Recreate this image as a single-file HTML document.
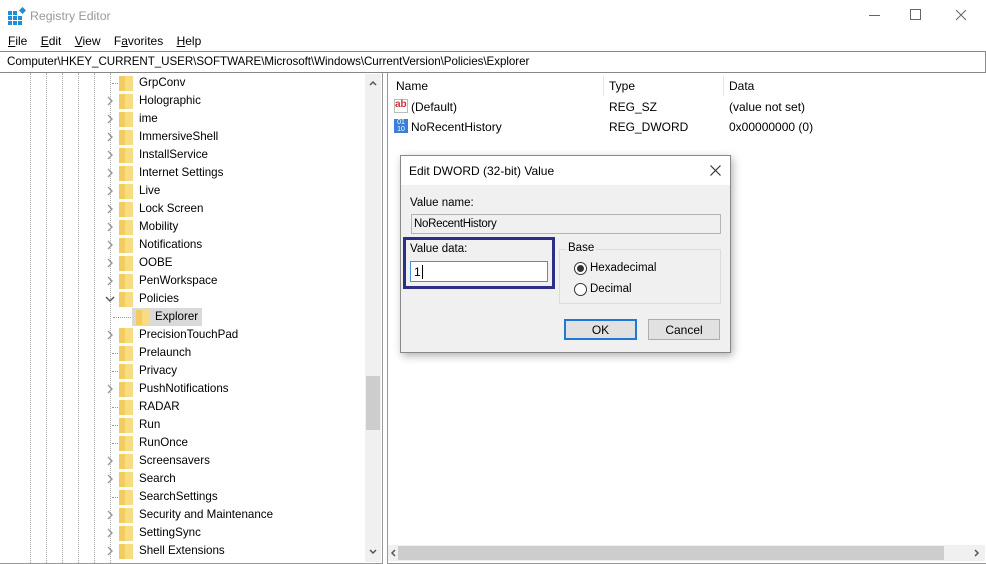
<!DOCTYPE html>
<html><head><style>
*{margin:0;padding:0;box-sizing:border-box}
body{width:986px;height:564px;background:#fff;font-family:"Liberation Sans",sans-serif;font-size:12px;color:#000;position:relative;overflow:hidden}
.a{position:absolute;white-space:nowrap}
.row{position:absolute;left:0;height:18px;width:365px}
.fold{position:absolute;left:119px;top:2px;width:14px;height:15px;background:#f8dc82;border-left:1px solid #e8c25a}
.fold:before{content:"";position:absolute;left:-1px;top:0;width:6px;height:15px;background:#f3cc60}
.lbl{position:absolute;left:139px;top:2px;font-size:11.6px}
.chev{position:absolute;left:105px;top:4px}
.dot{position:absolute;left:112px;top:9px;width:6px;border-top:1px dotted #999}
.vl{position:absolute;top:73px;height:490px;border-left:1px dotted #aaa}
</style></head><body>
<svg class="a" style="left:8px;top:7px" width="18" height="18" viewBox="0 0 18 18"><g fill="#1e8fd8"><rect x="0" y="4" width="4" height="4"/><rect x="5" y="4" width="4" height="4"/><rect x="0" y="9" width="4" height="4"/><rect x="5" y="9" width="4" height="4"/><rect x="10" y="9" width="4" height="4"/><rect x="0" y="14" width="4" height="4"/><rect x="5" y="14" width="4" height="4"/><rect x="10" y="14" width="4" height="4"/><rect x="12" y="1" width="5" height="5" transform="rotate(45 14.5 3.5)"/></g></svg>
<div class="a" style="left:30px;top:9px;font-size:12.3px;color:#999">Registry Editor</div>
<div class="a" style="left:869px;top:15px;width:11px;border-top:1px solid #666"></div>
<div class="a" style="left:910px;top:9px;width:11px;height:11px;border:1px solid #666"></div>
<svg class="a" style="left:955px;top:9px" width="12" height="12"><path d="M1 1L11 11M11 1L1 11" stroke="#666" stroke-width="1"/></svg>
<div class="a" style="left:8px;top:34px;font-size:12px"><u>F</u>ile&nbsp;&nbsp;&nbsp; <u>E</u>dit&nbsp;&nbsp;&nbsp; <u>V</u>iew&nbsp;&nbsp;&nbsp; F<u>a</u>vorites&nbsp;&nbsp;&nbsp; <u>H</u>elp</div>
<div class="a" style="left:0;top:51px;width:986px;height:22px;border:1px solid #888;border-left:none"></div>
<div class="a" style="left:7px;top:55px;font-size:11.6px;letter-spacing:-0.05px">Computer\HKEY_CURRENT_USER\SOFTWARE\Microsoft\Windows\CurrentVersion\Policies\Explorer</div>
<div class="a" style="left:0;top:73px;width:383px;height:491px;border-right:1px solid #999;border-bottom:1px solid #999"></div>
<div class="a" style="left:387px;top:73px;width:599px;height:491px;border-left:1px solid #999;border-bottom:1px solid #999"></div>
<div class="vl" style="left:30px"></div><div class="vl" style="left:46px"></div><div class="vl" style="left:62px"></div><div class="vl" style="left:78px"></div><div class="vl" style="left:94px"></div><div class="vl" style="left:110px"></div>
<div id="tree"></div>
<div class="a" style="left:365px;top:74px;width:16px;height:488px;background:#f0f0f0"></div>
<div class="a" style="left:366px;top:376px;width:14px;height:54px;background:#cdcdcd"></div>
<svg class="a" style="left:369px;top:80px" width="8" height="6"><path d="M1 5L4 2L7 5" stroke="#555" stroke-width="1.5" fill="none"/></svg>
<svg class="a" style="left:369px;top:549px" width="8" height="6"><path d="M1 1L4 4L7 1" stroke="#555" stroke-width="1.5" fill="none"/></svg>
<div class="a" style="left:603px;top:76px;height:20px;border-left:1px solid #e5e5e5"></div>
<div class="a" style="left:723px;top:76px;height:20px;border-left:1px solid #e5e5e5"></div>
<div class="a" style="left:396px;top:79px;font-size:12px">Name</div>
<div class="a" style="left:609px;top:79px;font-size:12px">Type</div>
<div class="a" style="left:729px;top:79px;font-size:12px">Data</div>
<div class="a" style="left:394px;top:99px;width:14px;height:14px;border:1px solid #bbb;color:#c33;font-size:10px;font-weight:bold;line-height:10px">ab</div>
<div class="a" style="left:411px;top:100px;font-size:12px">(Default)</div>
<div class="a" style="left:609px;top:100px;font-size:12px">REG_SZ</div>
<div class="a" style="left:729px;top:100px;font-size:12px">(value not set)</div>
<div class="a" style="left:394px;top:119px;width:14px;height:14px;background:#3b7fd8;color:#fff;font-size:7px;line-height:7px;text-align:center">01<br>10</div>
<div class="a" style="left:411px;top:120px;font-size:12px">NoRecentHistory</div>
<div class="a" style="left:609px;top:120px;font-size:12px">REG_DWORD</div>
<div class="a" style="left:729px;top:120px;font-size:12px">0x00000000 (0)</div>
<div class="a" style="left:388px;top:545px;width:597px;height:16px;background:#f0f0f0"></div>
<div class="a" style="left:398px;top:546px;width:546px;height:14px;background:#cdcdcd"></div>
<svg class="a" style="left:390px;top:549px" width="6" height="8"><path d="M5 1L2 4L5 7" stroke="#555" stroke-width="1.5" fill="none"/></svg>
<svg class="a" style="left:974px;top:549px" width="6" height="8"><path d="M1 1L4 4L1 7" stroke="#555" stroke-width="1.5" fill="none"/></svg>
<div class="a" style="left:400px;top:155px;width:331px;height:198px;background:#f0f0f0;border:1px solid #888;box-shadow:2px 3px 8px rgba(0,0,0,.3)"></div>
<div class="a" style="left:401px;top:156px;width:329px;height:29px;background:#fff"></div>
<div class="a" style="left:409px;top:164px;font-size:12px">Edit DWORD (32-bit) Value</div>
<svg class="a" style="left:710px;top:165px" width="11" height="11"><path d="M0.5 0.5L10.5 10.5M10.5 0.5L0.5 10.5" stroke="#333" stroke-width="1.2"/></svg>
<div class="a" style="left:410px;top:197px;font-size:11.5px">Value name:</div>
<div class="a" style="left:411px;top:214px;width:310px;height:20px;background:#f0f0f0;border:1px solid #b4b4b4;font-size:11.5px;padding:3px 0 0 2px;letter-spacing:-.3px">NoRecentHistory</div>
<div class="a" style="left:403px;top:237px;width:152px;height:52px;border:3px solid #2d2f86"></div>
<div class="a" style="left:410px;top:243px;font-size:11.5px">Value data:</div>
<div class="a" style="left:410px;top:261px;width:138px;height:21px;background:#fff;border:1px solid #4a8ed8;font-size:12px;padding:3px 0 0 3px">1<span style="border-left:1px solid #000;margin-left:1px"></span></div>
<div class="a" style="left:559px;top:249px;width:162px;height:55px;border:1px solid #dcdcdc"></div>
<div class="a" style="left:566px;top:242px;font-size:11.5px;background:#f0f0f0;padding:0 2px">Base</div>
<div class="a" style="left:574px;top:262px;width:13px;height:13px;border:1px solid #333;border-radius:50%;background:#fff"><div style="margin:2px;width:7px;height:7px;border-radius:50%;background:#333"></div></div>
<div class="a" style="left:590px;top:262px;font-size:11.5px">Hexadecimal</div>
<div class="a" style="left:574px;top:283px;width:13px;height:13px;border:1px solid #333;border-radius:50%;background:#fff"></div>
<div class="a" style="left:590px;top:283px;font-size:11.5px">Decimal</div>
<div class="a" style="left:564px;top:319px;width:73px;height:21px;background:#e1e1e1;border:2px solid #1c7ad4;text-align:center;font-size:12px;padding-top:2px">OK</div>
<div class="a" style="left:648px;top:319px;width:72px;height:21px;background:#e1e1e1;border:1px solid #adadad;text-align:center;font-size:12px;padding-top:3px">Cancel</div>
<script>
var items=[["GrpConv",0],["Holographic",1],["ime",1],["ImmersiveShell",1],["InstallService",1],["Internet Settings",1],["Live",1],["Lock Screen",1],["Mobility",1],["Notifications",1],["OOBE",1],["PenWorkspace",1],["Policies",2],["Explorer",3],["PrecisionTouchPad",1],["Prelaunch",0],["Privacy",0],["PushNotifications",1],["RADAR",0],["Run",0],["RunOnce",0],["Screensavers",1],["Search",1],["SearchSettings",0],["Security and Maintenance",1],["SettingSync",1],["Shell Extensions",1]];
var R='<svg class="chev" width="10" height="10"><path d="M3 1L7 5L3 9" stroke="#999" stroke-width="1.4" fill="none"/></svg>';
var D='<svg class="chev" width="10" height="10"><path d="M1 3L5 7L9 3" stroke="#555" stroke-width="1.4" fill="none"/></svg>';
var h="";items.forEach(function(it,i){var t=74+i*18;var s='<div class="row" style="top:'+t+'px">';
if(it[1]==3){s+='<div style="position:absolute;left:113px;top:9px;width:18px;border-top:1px dotted #999"></div><div style="position:absolute;left:132px;top:0;width:70px;height:18px;background:#d9d9d9"></div><div class="fold" style="left:136px"></div><div class="lbl" style="left:155px">'+it[0]+'</div>';}
else{if(it[1]==0)s+='<div class="dot"></div>';else if(it[1]==1)s+=R;else s+=D;
s+='<div class="fold"></div><div class="lbl">'+it[0]+'</div>';}
h+=s+'</div>';});document.getElementById('tree').innerHTML=h;
</script>
</body></html>
